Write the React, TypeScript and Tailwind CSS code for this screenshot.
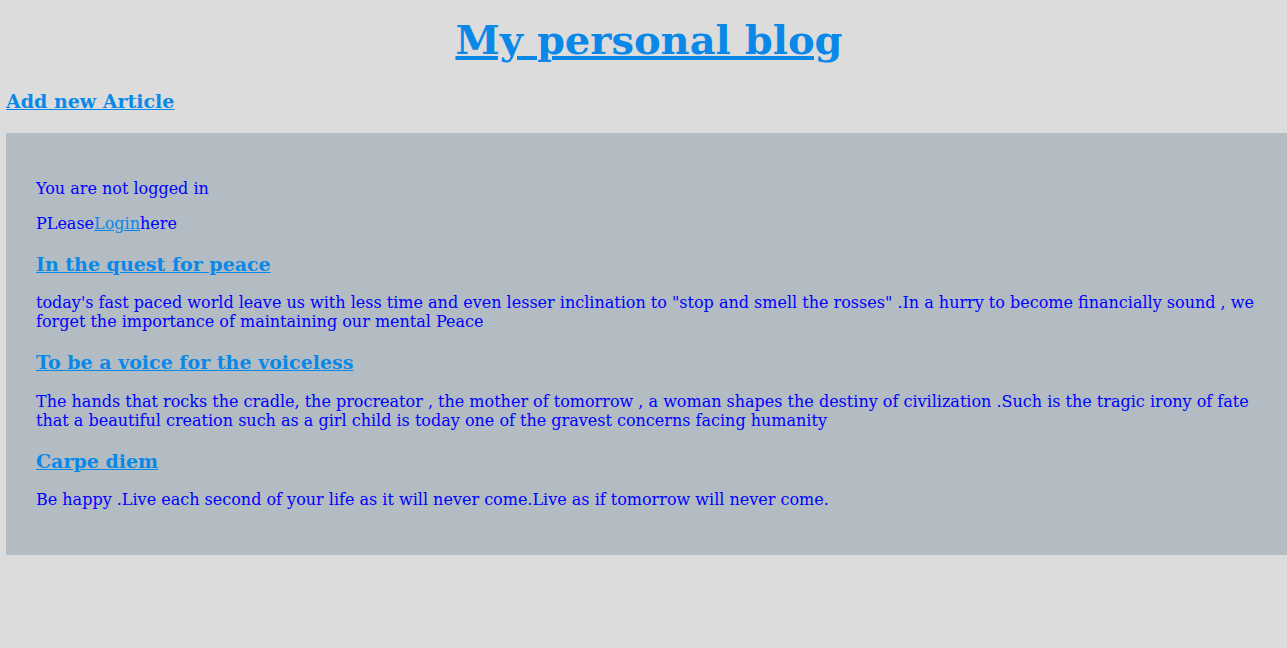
export default function App() {
  return (
    <div className="min-h-screen w-full overflow-hidden bg-[#dcdcdc] font-['DejaVu_Serif',serif] text-[16px] leading-[normal] text-[#0000ff]">
      <div className="ml-[6px] w-[1286px]">
        <h1 className="mt-[16px] mb-[26.8px] text-center text-[40px] font-bold leading-[normal]">
          <a href="#" className="text-[#0a88e8] underline">My personal blog</a>
        </h1>
        <h3 className="mt-0 mb-[21px] text-[19px] font-bold leading-[normal]">
          <a href="#" className="text-[#0a88e8] underline">Add new Article</a>
        </h3>
        <div className="bg-[#b2bcc2] p-[30px] pb-[29.5px]">
          <p className="my-4">You are not logged in</p>
          <p className="my-4">
            PLease<a href="#" className="text-[#0a88e8] underline">Login</a>here
          </p>
          <h3 className="mt-[19.9px] mb-[18.6px] text-[19px] font-bold leading-[normal]">
            <a href="#" className="text-[#0a88e8] underline">In the quest for peace</a>
          </h3>
          <p className="my-4">
            today's fast paced world leave us with less time and even lesser inclination to "stop and smell the rosses" .In a hurry to become financially sound , we forget the importance of maintaining our mental Peace
          </p>
          <h3 className="mt-[19.9px] mb-[18.6px] text-[19px] font-bold leading-[normal]">
            <a href="#" className="text-[#0a88e8] underline">To be a voice for the voiceless</a>
          </h3>
          <p className="my-4">
            The hands that rocks the cradle, the procreator , the mother of tomorrow , a woman shapes the destiny of civilization .Such is the tragic irony of fate that a beautiful creation such as a girl child is today one of the gravest concerns facing humanity
          </p>
          <h3 className="mt-[19.9px] mb-[18.6px] text-[19px] font-bold leading-[normal]">
            <a href="#" className="text-[#0a88e8] underline">Carpe diem</a>
          </h3>
          <p className="my-4">
            Be happy .Live each second of your life as it will never come.Live as if tomorrow will never come.
          </p>
        </div>
      </div>
    </div>
  );
}
